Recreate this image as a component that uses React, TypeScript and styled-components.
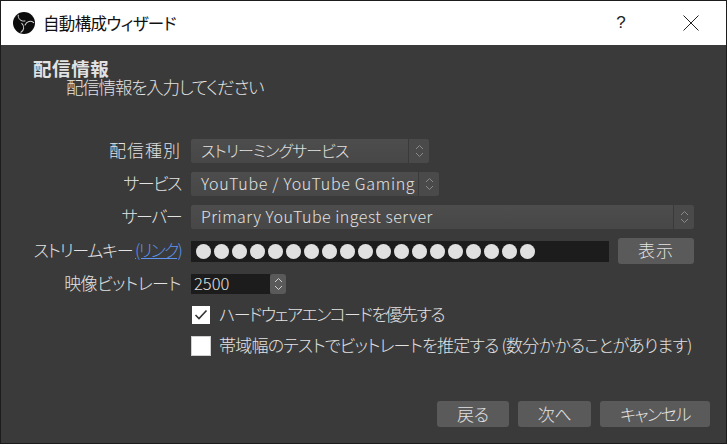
import React from "react";
import styled, { createGlobalStyle } from "styled-components";

const FONT = `"Noto Sans CJK JP", "Liberation Sans", sans-serif`;

const Global = createGlobalStyle`
  html, body { margin: 0; padding: 0; background: #1c1c1c; }
  * { box-sizing: border-box; }
`;

const Win = styled.div`
  width: 727px;
  height: 444px;
  border: 1px solid #1c1c1c;
  display: flex;
  flex-direction: column;
  background: #3a3a3a;
  font-family: ${FONT};
  font-weight: 300;
  font-feature-settings: "palt";
  color: #e2e2e2;
  overflow: hidden;
`;

const TitleBar = styled.div`
  height: 44px;
  flex: none;
  background: #fff;
  display: flex;
  align-items: center;
  padding-left: 12px;
  color: #111;
  font-size: 16.5px;
`;

const TitleText = styled.span`
  margin-left: 8px;
  flex: 1;
  font-weight: 400;
  letter-spacing: -0.65px;
`;

const Help = styled.span`
  width: 20px;
  text-align: center;
  font-family: "Liberation Sans", sans-serif;
  font-size: 17px;
  color: #222;
  margin-right: 52px;
`;

const CloseIcon = styled.svg`
  width: 16px;
  height: 16px;
  margin-right: 27px;
`;

const Body = styled.div`
  flex: 1;
  display: flex;
  flex-direction: column;
  padding: 14px 16px 16px 32px;
`;

const Heading = styled.div`
  font-size: 18.5px;
  font-weight: 700;
  line-height: 19px;
  letter-spacing: 0.6px;
`;

const SubHeading = styled.div`
  font-size: 17.5px;
  line-height: 18px;
  margin-left: 33px;
  letter-spacing: -1.2px;
`;

const Form = styled.div`
  display: grid;
  grid-template-columns: 148px 1fr;
  column-gap: 10px;
  row-gap: 9px;
  margin-top: 43px;
  align-items: center;
`;

const Label = styled.div<{ $ls?: number }>`
  font-size: 17px;
  line-height: 20px;
  padding-bottom: 2px;
  text-align: right;
  white-space: nowrap;
  letter-spacing: ${(p) => p.$ls ?? 0}px;
`;

const Link = styled.a`
  color: #5f95f0;
  text-decoration: underline;
  letter-spacing: -1.8px;
`;

const Field = styled.div`
  display: flex;
  align-items: center;
`;

const Combo = styled.div<{ $w: number }>`
  width: ${(p) => p.$w}px;
  height: 24px;
  display: flex;
  align-items: stretch;
  border-radius: 3px;
  background: #4b4b4b;
  overflow: hidden;
`;

const ComboText = styled.div<{ $ls: number }>`
  flex: 1;
  font-size: 16px;
  line-height: 22px;
  padding-left: 10px;
  white-space: nowrap;
  overflow: hidden;
  letter-spacing: ${(p) => p.$ls}px;
  background: linear-gradient(#4d4d4d, #474747);
`;

const ComboArrow = styled.div`
  flex: none;
  width: 21px;
  border-left: 1px solid #3a3a3a;
  display: flex;
  align-items: center;
  justify-content: center;
  background: #4a4a4a;
`;

const KeyRow = styled.div`
  display: flex;
  align-items: center;
  gap: 9px;
`;

const KeyInput = styled.div`
  width: 418px;
  height: 21px;
  background: #1c1c1c;
  padding-left: 5px;
  display: flex;
  align-items: center;
  gap: 3px;
`;

const Dot = styled.span`
  width: 15px;
  height: 15px;
  border-radius: 50%;
  background: #e0e0e0;
  flex: none;
`;

const Btn = styled.div<{ $w: number; $ls?: number }>`
  width: ${(p) => p.$w}px;
  height: 26px;
  background: #5a5a5a;
  border-radius: 3px;
  font-size: 17px;
  line-height: 25px;
  text-align: center;
  flex: none;
  letter-spacing: ${(p) => p.$ls ?? 0}px;
`;

const ShowBtn = styled(Btn)`
  line-height: 23px;
`;

const SpinBox = styled.div`
  display: flex;
  height: 20px;
`;

const SpinInput = styled.div`
  width: 79px;
  background: #1c1c1c;
  font-size: 16.5px;
  line-height: 18px;
  padding-left: 3px;
`;

const SpinButtons = styled.div`
  width: 16px;
  background: #5a5a5a;
  border-radius: 3px;
  display: flex;
  align-items: center;
  justify-content: center;
`;

const CheckRow = styled.div`
  display: flex;
  align-items: center;
  height: 22px;
  white-space: nowrap;
`;

const CheckLabel = styled.span<{ $ls: number }>`
  font-size: 17px;
  line-height: 20px;
  padding-bottom: 3px;
  letter-spacing: ${(p) => p.$ls}px;
`;

const Box = styled.div<{ $big?: boolean }>`
  flex: none;
  width: ${(p) => (p.$big ? 20 : 18)}px;
  height: ${(p) => (p.$big ? 20 : 18)}px;
  margin-left: ${(p) => (p.$big ? 0 : 1)}px;
  margin-right: ${(p) => (p.$big ? 8 : 9)}px;
  background: #fff;
  border: 1px solid ${(p) => (p.$big ? "#cfcfcf" : "#fff")};
  display: flex;
  align-items: center;
  justify-content: center;
`;

const Footer = styled.div`
  margin-top: auto;
  display: flex;
  justify-content: flex-end;
  gap: 9px;
`;

const Swirl = "M5.2 3.2 C5 7 7.8 9.8 12 9";

const Logo = () => (
  <svg width="22" height="22" viewBox="0 0 22 22">
    <circle cx="11" cy="11" r="11" fill="#0c0c0c" />
    <g fill="none" stroke="#d4d4d4" strokeWidth="1" strokeLinecap="round">
      <path d={Swirl} />
      <path d={Swirl} transform="rotate(125 11 11)" />
      <path d={Swirl} transform="rotate(235 11 11)" />
    </g>
  </svg>
);

const Arrows = ({ color = "#8a8a8a" }: { color?: string }) => (
  <svg width="9" height="14" viewBox="0 0 9 14" fill="none" stroke={color} strokeWidth="1">
    <path d="M1 5 L4.5 1.5 L8 5" />
    <path d="M1 9 L4.5 12.5 L8 9" />
  </svg>
);

const App = () => (
  <Win>
    <Global />
    <TitleBar>
      <Logo />
      <TitleText>自動構成ウィザード</TitleText>
      <Help>?</Help>
      <CloseIcon viewBox="0 0 16 16" fill="none" stroke="#222" strokeWidth="1">
        <path d="M0.5 0.5 L15.5 15.5 M15.5 0.5 L0.5 15.5" />
      </CloseIcon>
    </TitleBar>
    <Body>
      <Heading>配信情報</Heading>
      <SubHeading>配信情報を入力してください</SubHeading>
      <Form>
        <Label $ls={1}>配信種別</Label>
        <Field>
          <Combo $w={238}>
            <ComboText $ls={-0.9}>ストリーミングサービス</ComboText>
            <ComboArrow><Arrows /></ComboArrow>
          </Combo>
        </Field>
        <Label $ls={-1.5}>サービス</Label>
        <Field>
          <Combo $w={248}>
            <ComboText $ls={0.7}>YouTube / YouTube Gaming</ComboText>
            <ComboArrow><Arrows /></ComboArrow>
          </Combo>
        </Field>
        <Label $ls={-1.5}>サーバー</Label>
        <Field>
          <Combo $w={503}>
            <ComboText $ls={0.5}>Primary YouTube ingest server</ComboText>
            <ComboArrow><Arrows /></ComboArrow>
          </Combo>
        </Field>
        <Label $ls={-1.2}>ストリームキー <Link>(リンク)</Link></Label>
        <Field>
          <KeyRow>
            <KeyInput>
              {Array.from({ length: 19 }, (_, i) => <Dot key={i} />)}
            </KeyInput>
            <ShowBtn $w={76} $ls={1}>表示</ShowBtn>
          </KeyRow>
        </Field>
        <Label $ls={-0.5}>映像ビットレート</Label>
        <Field>
          <SpinBox>
            <SpinInput>2500</SpinInput>
            <SpinButtons><Arrows color="#d0d0d0" /></SpinButtons>
          </SpinBox>
        </Field>
        <span />
        <Field>
          <CheckRow>
            <Box>
              <svg width="14" height="12" viewBox="0 0 14 12" fill="none" stroke="#333" strokeWidth="1.6">
                <path d="M1.5 6 L5 9.5 L12.5 1.5" />
              </svg>
            </Box>
            <CheckLabel $ls={-1.55}>ハードウェアエンコードを優先する</CheckLabel>
          </CheckRow>
        </Field>
        <span />
        <Field>
          <CheckRow>
            <Box $big />
            <CheckLabel $ls={-0.77}>帯域幅のテストでビットレートを推定する (数分かかることがあります)</CheckLabel>
          </CheckRow>
        </Field>
      </Form>
      <Footer>
        <Btn $w={72}>戻る</Btn>
        <Btn $w={73} $ls={-0.5}>次へ</Btn>
        <Btn $w={110} $ls={-1.4}>キャンセル</Btn>
      </Footer>
    </Body>
  </Win>
);

export default App;
